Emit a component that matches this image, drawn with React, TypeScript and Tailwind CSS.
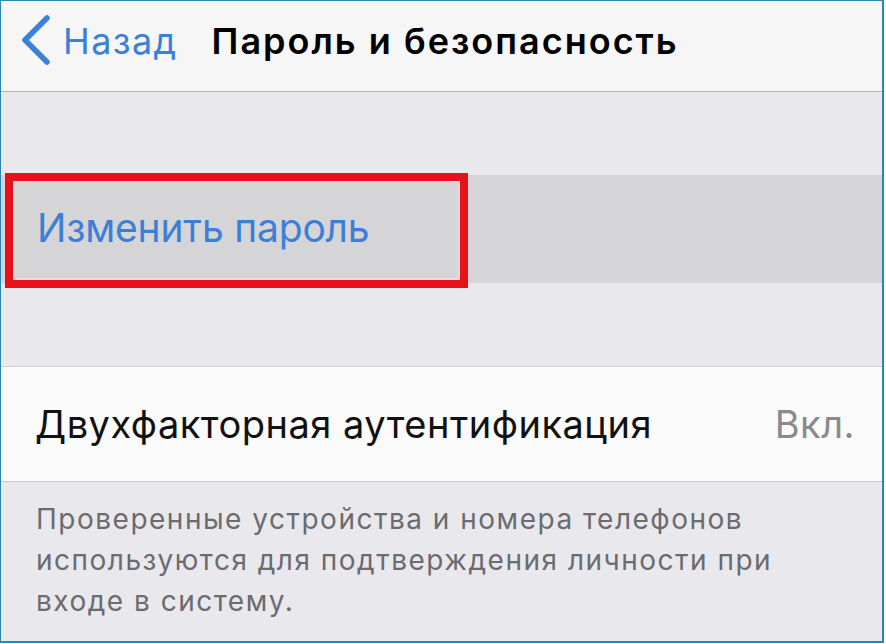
export default function App() {
  return (
    <div className="w-[886px] h-[644px] bg-white" style={{ fontFamily: 'Inter, Roboto, "Noto Sans", sans-serif' }}>
      <div className="w-[884px] h-[643px] border border-[#2c86b4] border-r-2 border-b-2 flex flex-col overflow-hidden">
        {/* nav bar */}
        <div className="h-[91px] shrink-0 bg-[#f6f6f7] border-b border-[#b4b4b8] flex items-center pb-[10px]">
          <svg className="ml-[19px] mt-[-3px]" width="32" height="50" viewBox="0 0 32 50" fill="none">
            <path d="M27 3 L5 25 L27 47" stroke="#3a80d8" strokeWidth="5.5" strokeLinecap="round" strokeLinejoin="round" />
          </svg>
          <span className="ml-[11px] text-[36px] leading-none tracking-[1.4px] text-[#3a80d8]">Назад</span>
          <span className="ml-[34px] text-[36px] leading-none tracking-[2px] font-semibold text-black">Пароль и безопасность</span>
        </div>

        {/* spacer */}
        <div className="h-[83px] shrink-0 bg-[#e9e9ed]" />

        {/* highlighted row */}
        <div className="relative h-[108px] shrink-0 bg-[#d5d5d7] flex items-center pl-[36px]">
          <span className="text-[39px] leading-none tracking-[-0.2px] text-[#3d7fd6] mt-[-4px]">Изменить пароль</span>
          <div className="absolute left-[4px] top-[-2px] w-[463px] h-[115px] border-[8px] border-[#e5121b]">
            <div className="w-full h-full border-2 border-[#f6d6d6]" />
          </div>
        </div>

        {/* spacer */}
        <div className="h-[84px] shrink-0 bg-[#e9e9ed] border-b border-[#cfcfd3]" />

        {/* two-factor row */}
        <div className="h-[115px] shrink-0 bg-[#fafafa] border-b border-[#c8c8cc] flex items-center pl-[34px] pr-[27px]">
          <span className="text-[38px] leading-none tracking-[0.5px] text-[#111]">Двухфакторная аутентификация</span>
          <span className="ml-auto text-[38px] leading-none tracking-[0.5px] text-[#8a8a8e]">Вкл.</span>
        </div>

        {/* footer */}
        <div className="flex-1 bg-[#e9e9ed] pl-[35px] pt-[17px]">
          <p className="text-[28px] leading-[41px] tracking-[1.5px] text-[#6b6b70] whitespace-nowrap">
            Проверенные устройства и номера телефонов
            <br />
            используются для подтверждения личности при
            <br />
            входе в систему.
          </p>
        </div>
      </div>
    </div>
  );
}
